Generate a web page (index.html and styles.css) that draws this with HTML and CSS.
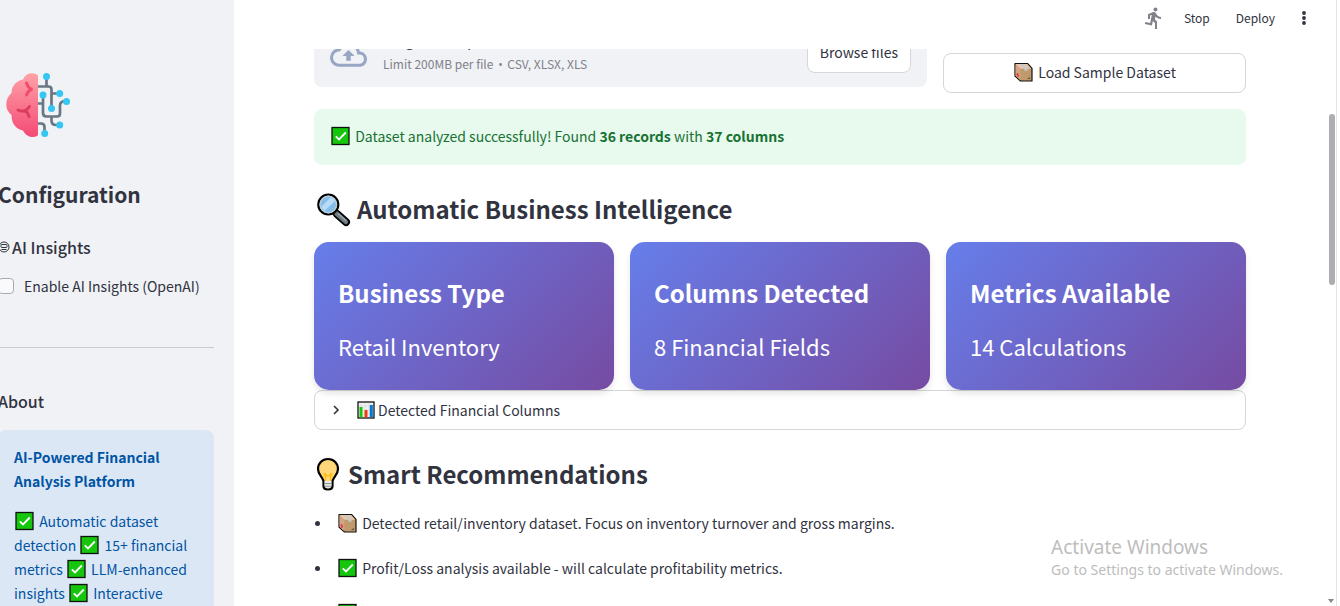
FILE: index.html
```html
<!DOCTYPE html>
<html lang="en">
<head>
<meta charset="utf-8">
<title>AI-Powered Financial Analysis Platform</title>
<link rel="stylesheet" href="styles.css">
</head>
<body>
<svg class="defs" aria-hidden="true">
  <symbol id="check" viewBox="0 0 22 20">
    <rect x="2" y="1.500" width="17" height="17" fill="#16c60c" stroke="#111" stroke-width="1.300"/>
    <path d="M5.800 10.300l3.200 3.200 6.800-7" fill="none" stroke="#fff" stroke-width="1.800"/>
  </symbol>
  <symbol id="box" viewBox="0 0 22 20">
    <path d="M2 1.500h12.500l4.500 5V19H7.500L2 14z" fill="#c19a6b" stroke="#111" stroke-width="1.200" stroke-linejoin="round"/>
    <path d="M2.500 2h11.700l4.200 4.700H7.300z" fill="#e6c5a8"/>
    <path d="M2.500 2.400l4.800 4.500v11.400L2.500 13.700z" fill="#d3a583"/>
    <path d="M7 2h3.500l4 4.700v2h-3v-2z" fill="#c5cbd0"/>
    <path d="M3.500 12l2.500 2M4.800 11v4" stroke="#e8374a" stroke-width="1.200"/>
    <path d="M14 17l3-2v2z" fill="#604c39"/>
  </symbol>
  <symbol id="chart" viewBox="0 0 22 20">
    <rect x="2" y="2" width="16" height="16" fill="#f0f0f0" stroke="#111" stroke-width="1.300"/>
    <path d="M5 3v14M9 3v14M13 3v14M3 6h14M3 10h14M3 14h14" stroke="#dadada" stroke-width=".6"/>
    <path d="M3.500 7h3v10.500h-3z" fill="#16c60c"/>
    <path d="M8.500 10h3v7.500h-3z" fill="#f03a17"/>
    <path d="M13.800 5h3v12.500h-3z" fill="#0078d7"/>
  </symbol>
</svg>
<div class="app">
  <aside class="sidebar">
    <div class="sidebar-inner">
      <svg class="logo" viewBox="0 0 76 72" aria-label="Brain circuit">
        <defs>
          <linearGradient id="pink" x1="0" y1="0" x2="0" y2="1"><stop offset="0" stop-color="#ffa2a7"/><stop offset="1" stop-color="#f34a75"/></linearGradient>
        </defs>
        <path d="M38 7.500C36 4.500 26 3 23 11.500c-6 1-11.500 6-11.500 13.500C4.500 31 4.500 42 11.500 47c0 9 4.500 14 11.500 15.500 4 8 13 7.500 15 4.500z" fill="url(#pink)"/>
        <path d="M26.500 15c1 3 2.200 5.200 5 6.300M26.500 27c1-3 2.200-4.600 5-5.700" fill="none" stroke="#ee4d70" stroke-width="3" stroke-linecap="round"/>
        <path d="M18 42c4 2 8 1.500 11.500-3.500M23.500 43c3 0 4.700 2 5.500 5.500" fill="none" stroke="#dd3c60" stroke-width="3" stroke-linecap="round"/>
        <g fill="none" stroke="#697782" stroke-width="2.700">
          <path d="M38 18.500h10.500q3 0 3 3V40M46.500 9v9.500M51.500 25.500h8M38 35.500h5M43 27v18q0 3.500 3.500 3.500h10.500q3 0 3-3v-8q0-4.500 6-4.500M51.500 48.500v4q0 4.500 4.500 4.500h3.500M38 55.500h3q3.500 0 3.500 3.500v6"/>
        </g>
        <g fill="#36c6f4"><circle cx="46.500" cy="8.500" r="3.500"/><circle cx="59.700" cy="25.500" r="3.500"/><circle cx="66.500" cy="33.500" r="3.500"/><circle cx="43" cy="27" r="3.500"/><circle cx="51.500" cy="40.500" r="3.500"/><circle cx="59.700" cy="57" r="3.500"/><circle cx="44.700" cy="65.500" r="3.500"/></g>
      </svg>
      <h2 class="side-title">Configuration</h2>
      <h3 class="side-heading"><svg class="robot" viewBox="0 0 12 12" aria-hidden="true"><circle cx="6" cy="6" r="5" fill="none" stroke="#31333f"/><rect x="3" y="3.500" width="6" height="3" rx="1" fill="none" stroke="#31333f"/><path d="M3.500 8.500h5" stroke="#31333f"/></svg>AI Insights</h3>
      <label class="check-row"><input type="checkbox" class="check-box">Enable AI Insights (OpenAI)</label>
      <hr class="divider">
      <h3 class="side-heading about">About</h3>
      <div class="info">
        <p><strong>AI-Powered Financial Analysis Platform</strong></p>
        <p><svg class="emoji"><use href="#check"/></svg> Automatic dataset detection <svg class="emoji"><use href="#check"/></svg> 15+ financial metrics <svg class="emoji"><use href="#check"/></svg> LLM-enhanced insights <svg class="emoji"><use href="#check"/></svg> Interactive</p>
      </div>
    </div>
  </aside>
  <main class="main">
    <header class="toolbar">
      <svg class="runner" viewBox="0 0 24 24" aria-label="Running"><path fill="#808189" d="M13.490 5.480c1.100 0 2-.9 2-2s-.9-2-2-2-2 .9-2 2 .9 2 2 2zm-3.600 13.900l1-4.400 2.100 2v6h2v-7.500l-2.100-2 .6-3c1.300 1.500 3.300 2.500 5.500 2.500v-2c-1.900 0-3.500-1-4.300-2.400l-1-1.600c-.4-.6-1-1-1.700-1-.3 0-.5.1-.8.1l-5.200 2.200v4.700h2v-3.400l1.800-.7-1.600 8.100-4.900-1-.4 2 7 1.400z"/></svg>
      <button class="tool">Stop</button>
      <button class="tool">Deploy</button>
      <button class="menu" aria-label="Main menu"><svg viewBox="0 0 6 16"><g fill="#31333f"><circle cx="3" cy="3" r="1.900"/><circle cx="3" cy="8" r="1.900"/><circle cx="3" cy="13" r="1.900"/></g></svg></button>
    </header>
    <div class="content">
      <div class="source-row">
        <div class="uploader">
          <svg class="cloud" viewBox="0 0 24 24" aria-hidden="true"><path fill="#97a6c3" d="M19.350 10.040A7.490 7.490 0 0012 4C9.110 4 6.600 5.640 5.350 8.040A5.994 5.994 0 000 14c0 3.310 2.690 6 6 6h13c2.760 0 5-2.240 5-5 0-2.640-2.050-4.780-4.650-4.960zM19 18H6c-2.210 0-4-1.790-4-4 0-2.050 1.530-3.760 3.560-3.970l1.070-.11.5-.95A5.469 5.469 0 0112 6c2.620 0 4.880 1.860 5.390 4.430l.3 1.500 1.530.11A2.980 2.980 0 0122 15c0 1.650-1.350 3-3 3zM8 13h2.550v3h2.900v-3H16l-4-4-4 4z"/></svg>
          <div class="upload-text"><span>Drag and drop file here</span><small>Limit 200MB per file <span class="dot">•</span> CSV, XLSX, XLS</small></div>
          <button class="btn browse">Browse files</button>
        </div>
        <button class="btn load"><svg class="emoji"><use href="#box"/></svg> Load Sample Dataset</button>
      </div>
      <div class="success"><svg class="emoji"><use href="#check"/></svg> Dataset analyzed successfully! Found <strong>36 records</strong> with <strong>37 columns</strong></div>
      <h2 class="section"><svg class="lens" viewBox="0 0 38 36" aria-hidden="true"><path d="M23 22l9 8" stroke="#000" stroke-width="8" stroke-linecap="round"/><path d="M22.500 21.500l9.300 8.400" stroke="#6d7c80" stroke-width="4.500" stroke-linecap="round"/><path d="M24 21.500l8.500 7.500" stroke="#98a5a8" stroke-width="1.500"/><circle cx="14.300" cy="12.500" r="10" fill="#83bdec" stroke="#000" stroke-width="2.200"/><circle cx="14.300" cy="12.500" r="8.300" fill="none" stroke="#c2cdd4" stroke-width="1.300"/><path d="M7.500 14.500L17 5q3 1 4 4L10.500 19q-2.500-2-3-4.500z" fill="#b8dbf7"/></svg>Automatic Business Intelligence</h2>
      <div class="cards">
        <article class="card"><h3>Business Type</h3><p>Retail Inventory</p></article>
        <article class="card"><h3>Columns Detected</h3><p>8 Financial Fields</p></article>
        <article class="card"><h3>Metrics Available</h3><p>14 Calculations</p></article>
      </div>
      <button class="expander" aria-expanded="false"><svg class="chevron" viewBox="0 0 10 12"><path d="M3 2l4 4-4 4" fill="none" stroke="#31333f" stroke-width="1.600"/></svg><svg class="emoji"><use href="#chart"/></svg> Detected Financial Columns</button>
      <h2 class="section"><svg class="bulb" viewBox="0 0 28 36" aria-hidden="true"><path d="M14 2C8 2 4 6.500 4 12c0 6 4.500 7.500 5.500 12v5q0 3.500 4.500 3.500t4.500-3.500v-5C19.500 19.500 24 18 24 12c0-5.500-4-10-10-10z" fill="#ffd679" stroke="#000" stroke-width="2.200"/><path d="M10.600 24h6.800v5q-.5 2.300-3.400 2.300T10.600 29z" fill="#e9edf0"/><path d="M10.500 26.500h7M10.500 29.200h7" stroke="#85929a" stroke-width="1"/><path d="M11.500 23.500V19q-2.500-1-1-2.500 2 0 1.500 2.500h4q-.5-2.500 1.500-2.500 1.500 1.500-1 2.500v4.500" fill="none" stroke="#ffb900" stroke-width="1.200"/></svg>Smart Recommendations</h2>
      <ul class="recs">
        <li><svg class="emoji"><use href="#box"/></svg> Detected retail/inventory dataset. Focus on inventory turnover and gross margins.</li>
        <li><svg class="emoji"><use href="#check"/></svg> Profit/Loss analysis available - will calculate profitability metrics.</li>
        <li><svg class="emoji"><use href="#check"/></svg></li>
      </ul>
    </div>
    <div class="scroll-thumb"></div>
    <svg class="scroll-arrow" viewBox="0 0 6 4"><path d="M0 0h6L3 4z" fill="#85868b"/></svg>
    <div class="watermark"><span class="wm-title">Activate Windows</span><span>Go to Settings to activate Windows.</span></div>
  </main>
</div>
</body>
</html>
```
FILE: styles.css
```css
* { box-sizing: border-box; }
body {
  margin: 0;
  color: #31333f;
  background: #fff;
  font: 14px/24px "Noto Sans CJK SC", "Open Sans", sans-serif;
}
h2, h3, p, ul { margin: 0; padding: 0; }
button { font: inherit; color: inherit; }
.defs { display: none; }
.app { display: flex; height: 100vh; overflow: hidden; }
.emoji { width: 22px; height: 20px; vertical-align: -4px; }

.sidebar { flex: 0 0 234px; background: #f0f2f6; overflow: hidden; }
.sidebar-inner { margin: 0 20px 0 -2px; padding-top: 68px; }
.logo { display: block; width: 76px; height: 72px; margin-left: 2px; }
.side-title { margin-top: 39px; font-size: 21px; line-height: 30px; font-weight: 700; }
.side-heading { display: flex; align-items: center; margin-top: 26px; font-size: 16px; line-height: 24px; font-weight: 500; }
.robot { width: 12px; height: 12px; margin-right: 2px; }
.check-row { display: flex; align-items: center; gap: 10px; margin-top: 15px; }
.check-box { appearance: none; width: 16px; height: 16px; margin: 0; border: 1px solid #a9aab1; border-radius: 4px; background: #fafafc; }
.divider { margin: 49px 0 0; border: 0; border-top: 1px solid #c9cad0; }
.about { margin-top: 41px; }
.info { margin-top: 17px; padding: 15px 16px 17px; border-radius: 8px; background: #dce7f6; color: #0054a3; }
.info p + p { margin-top: 16px; }
strong { font-weight: 700; }

.main { position: relative; display: flex; flex-direction: column; flex: 1; min-width: 0; margin-right: 3px; border-right: 1px solid #e4e4e6; }
.toolbar { display: flex; flex: 0 0 49px; align-items: flex-start; justify-content: flex-end; padding: 6px 29px 0 0; font-size: 12px; }
.runner { width: 24px; height: 24px; margin-right: 18px; }
.tool { margin: 0 26px 0 0; padding: 0; border: 0; background: none; }
.menu { display: flex; width: 6px; height: 24px; padding: 4px 0; border: 0; background: none; }
.menu svg { width: 6px; height: 16px; }
.content { flex: 1; min-height: 0; overflow: hidden; padding: 0 90px 0 80px; }
.source-row { display: grid; grid-template-columns: 613fr 303fr; gap: 16px; align-items: start; }
.uploader { display: flex; align-items: flex-end; height: 38px; padding: 0 16px 14px; overflow: hidden; background: #f0f2f6; border-radius: 0 0 8px 8px; }
.cloud { flex: none; width: 37px; height: 37px; margin-right: 16px; }
.upload-text { display: flex; flex: 1; flex-direction: column; gap: 4px; }
.upload-text small { font-size: 12px; line-height: 16px; color: #808189; }
.dot { margin: 0 2px; font-family: "Open Sans", sans-serif; }
.btn { height: 40px; padding: 0 12px 2px; border: 1px solid #d6d6d9; border-radius: 8px; background: #fff; }
.browse { flex: none; }
.load { margin-top: 4px; }
.success { margin-top: 16px; padding: 15px 16px 17px; border-radius: 8px; background: #e8f9ee; color: #177233; }
.section { display: flex; height: 36px; margin: 27px 0 14px; font-size: 24px; line-height: 33px; font-weight: 700; }
.lens { width: 38px; height: 36px; margin-right: 5px; }
.bulb { width: 28px; height: 36px; margin-right: 6px; }
.cards { position: relative; display: grid; grid-template-columns: repeat(3, 1fr); gap: 16px; }
.card { padding: 34px 24px 27px; border-radius: 15px; background: linear-gradient(135deg, #667eea, #764ba2); box-shadow: 0 4px 6px rgba(0, 0, 0, .1); color: #fff; line-height: 34px; }
.card h3 { font-size: 24px; font-weight: 700; }
.card p { margin-top: 19px; font-size: 22px; }
.expander { display: flex; align-items: center; width: 100%; height: 40px; padding: 0 16px; border: 1px solid #d6d6d9; border-radius: 8px; background: none; }
.chevron { width: 10px; height: 12px; margin-right: 15px; }
.recs { padding: 4px 0 0 1px; list-style: none; }
.recs li { margin-bottom: 21px; }
.recs li::before { content: ""; display: inline-block; width: 5px; height: 5px; margin-right: 17px; border-radius: 50%; background: #31333f; vertical-align: 3px; }

.scroll-thumb { position: absolute; top: 114px; right: 1px; width: 6px; height: 171px; border-radius: 3px; background: #adadb2; }
.scroll-arrow { position: absolute; right: 2px; bottom: 3px; width: 6px; height: 4px; }
.watermark { position: absolute; right: 53px; bottom: 26px; display: flex; flex-direction: column; font: 14px/20px "Noto Sans", sans-serif; color: #bdbdbd; }
.wm-title { font-size: 19px; line-height: 26px; }
```
